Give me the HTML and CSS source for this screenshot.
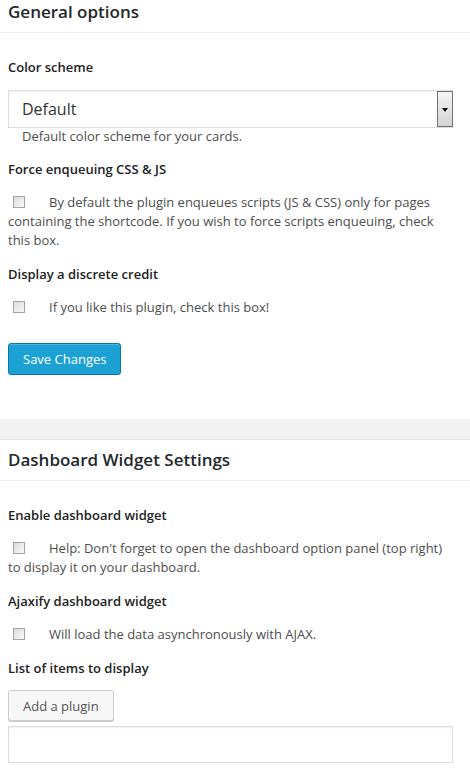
FILE: index.html
```html
<!DOCTYPE html>
<html>
<head>
<link rel="stylesheet" href="styles.css">
</head>
<body>

<div class="section">
    <h2 class="section-title">General options</h2>

    <div class="fields">
        <div class="field-label first">Color scheme</div>
        <div class="select">
            <span class="select-value">Default</span>
            <span class="select-arrow"></span>
        </div>
        <p class="desc">Default color scheme for your cards.</p>

        <div class="field-label">Force enqueuing CSS &amp; JS</div>
        <p class="check-row"><span class="checkbox"></span>By default the plugin enqueues scripts (JS &amp; CSS) only for pages containing the shortcode. If you wish to force scripts enqueuing, check this box.</p>

        <div class="field-label">Display a discrete credit</div>
        <p class="check-row"><span class="checkbox"></span>If you like this plugin, check this box!</p>

        <button class="btn btn-primary">Save Changes</button>
    </div>
</div>

<div class="band"></div>

<div class="section">
    <h2 class="section-title">Dashboard Widget Settings</h2>

    <div class="fields">
        <div class="field-label first">Enable dashboard widget</div>
        <p class="check-row"><span class="checkbox"></span>Help: Don't forget to open the dashboard option panel (top right) to display it on your dashboard.</p>

        <div class="field-label">Ajaxify dashboard widget</div>
        <p class="check-row"><span class="checkbox"></span>Will load the data asynchronously with AJAX.</p>

        <div class="field-label">List of items to display</div>
        <button class="btn btn-secondary">Add a plugin</button>
        <div class="textbox"></div>
    </div>
</div>

</body>
</html>
```

FILE: styles.css
```css
body {
    font-family: "Open Sans", sans-serif;
    margin: 0;
    padding: 0;
    background-color: #fff;
    color: #444;
}

.section-title {
    margin: 0;
    padding: 0 8px 8px;
    font-size: 17px;
    line-height: 24px;
    font-weight: 600;
    color: #23282d;
    border-bottom: 1px solid #eee;
}

.fields {
    padding: 0 17px 0 8px;
    display: flex;
    flex-direction: column;
    align-items: flex-start;
}

.field-label {
    font-size: 13px;
    line-height: 20px;
    font-weight: 600;
    color: #222;
    margin-top: 14px;
}

.field-label.first {
    margin-top: 24px;
}

.select {
    align-self: stretch;
    display: flex;
    height: 38px;
    margin-top: 13px;
    box-sizing: border-box;
    border: 1px solid #ddd;
    box-shadow: inset 0 1px 2px rgba(0, 0, 0, 0.07);
}

.select-value {
    flex: 1;
    padding-left: 13px;
    font-size: 16px;
    line-height: 36px;
    color: #333;
}

.select-arrow {
    width: 14px;
    margin: 0 -1px 0 0;
    border: 1px solid #707070;
    background: linear-gradient(#f4f4f4, #d4d4d4);
    position: relative;
}

.select-arrow::after {
    content: "";
    position: absolute;
    left: 4px;
    top: 16px;
    border-left: 3px solid transparent;
    border-right: 3px solid transparent;
    border-top: 4px solid #000;
}

.desc {
    margin: 0;
    padding-left: 14px;
    font-size: 13px;
    line-height: 17px;
    color: #4d4d4d;
}

.check-row {
    margin: 14px 0 0;
    font-size: 13px;
    line-height: 19px;
    color: #4d4d4d;
}

.checkbox {
    display: inline-block;
    width: 12px;
    height: 12px;
    box-sizing: border-box;
    margin: 0 24px 0 5px;
    vertical-align: -1px;
    border: 1px solid #a3a3a3;
    background: linear-gradient(135deg, #dcdcdc, #f8f8f8);
}

.btn {
    font-family: "Open Sans", sans-serif;
    font-size: 13px;
    border-radius: 3px;
    cursor: pointer;
}

.btn-primary {
    margin-top: 26px;
    height: 32px;
    padding: 0 14px;
    background-color: #1ca1d4;
    border: 1px solid #0578a6;
    color: #fff;
    box-shadow: inset 0 1px 0 rgba(120, 200, 230, 0.5);
}

.btn-secondary {
    margin-top: 12px;
    height: 31px;
    padding: 0 14px;
    background-color: #f7f7f7;
    border: 1px solid #ccc;
    color: #555;
    box-shadow: 0 1px 0 #ccc;
}

.textbox {
    align-self: stretch;
    height: 37px;
    margin-top: 5px;
    box-sizing: border-box;
    border: 1px solid #ddd;
    box-shadow: inset 0 1px 2px rgba(0, 0, 0, 0.07);
}

.band {
    height: 20px;
    margin-top: 44px;
    margin-bottom: 8px;
    background-color: #f1f1f1;
    border-bottom: 1px solid #e5e5e5;
}
```
